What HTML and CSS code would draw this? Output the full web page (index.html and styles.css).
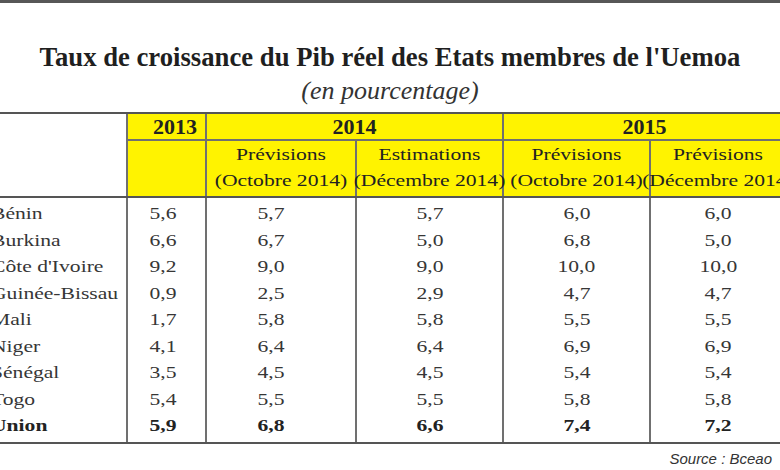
FILE: index.html
```html
<!DOCTYPE html>
<html lang="fr">
<head>
<meta charset="utf-8">
<title>Taux de croissance du Pib réel des Etats membres de l'Uemoa</title>
<link rel="stylesheet" href="styles.css">
</head>
<body>
<div class="topbar"></div>
<h1 class="title">Taux de croissance du Pib réel des Etats membres de l'Uemoa</h1>
<p class="subtitle">(en pourcentage)</p>
<table class="growth">
  <colgroup>
    <col class="c-label"><col class="c-2013"><col class="c-prev14"><col class="c-est14"><col class="c-prev15a"><col class="c-prev15b">
  </colgroup>
  <thead>
    <tr class="years">
      <th class="blank" rowspan="2"></th>
      <th class="year y2013">2013</th>
      <th class="year" colspan="2">2014</th>
      <th class="year" colspan="2">2015</th>
    </tr>
    <tr class="kinds">
      <th class="sub"></th>
      <th class="sub"><span class="s">Prévisions</span><span class="s">(Octobre 2014)</span></th>
      <th class="sub"><span class="s">Estimations</span><span class="s">(Décembre 2014)</span></th>
      <th class="sub"><span class="s">Prévisions</span><span class="s">(Octobre 2014)</span></th>
      <th class="sub"><span class="s">Prévisions</span><span class="s">(Décembre 2014)</span></th>
    </tr>
  </thead>
  <tbody>
    <tr class="first"><td class="country"><span class="s">Bénin</span></td><td class="v13"><span class="s">5,6</span></td><td class="v14p"><span class="s">5,7</span></td><td><span class="s">5,7</span></td><td><span class="s">6,0</span></td><td><span class="s">6,0</span></td></tr>
    <tr><td class="country"><span class="s">Burkina</span></td><td class="v13"><span class="s">6,6</span></td><td class="v14p"><span class="s">6,7</span></td><td><span class="s">5,0</span></td><td><span class="s">6,8</span></td><td><span class="s">5,0</span></td></tr>
    <tr><td class="country"><span class="s">Côte d'Ivoire</span></td><td class="v13"><span class="s">9,2</span></td><td class="v14p"><span class="s">9,0</span></td><td><span class="s">9,0</span></td><td><span class="s">10,0</span></td><td><span class="s">10,0</span></td></tr>
    <tr><td class="country"><span class="s">Guinée-Bissau</span></td><td class="v13"><span class="s">0,9</span></td><td class="v14p"><span class="s">2,5</span></td><td><span class="s">2,9</span></td><td><span class="s">4,7</span></td><td><span class="s">4,7</span></td></tr>
    <tr><td class="country"><span class="s">Mali</span></td><td class="v13"><span class="s">1,7</span></td><td class="v14p"><span class="s">5,8</span></td><td><span class="s">5,8</span></td><td><span class="s">5,5</span></td><td><span class="s">5,5</span></td></tr>
    <tr><td class="country"><span class="s">Niger</span></td><td class="v13"><span class="s">4,1</span></td><td class="v14p"><span class="s">6,4</span></td><td><span class="s">6,4</span></td><td><span class="s">6,9</span></td><td><span class="s">6,9</span></td></tr>
    <tr><td class="country"><span class="s">Sénégal</span></td><td class="v13"><span class="s">3,5</span></td><td class="v14p"><span class="s">4,5</span></td><td><span class="s">4,5</span></td><td><span class="s">5,4</span></td><td><span class="s">5,4</span></td></tr>
    <tr><td class="country"><span class="s">Togo</span></td><td class="v13"><span class="s">5,4</span></td><td class="v14p"><span class="s">5,5</span></td><td><span class="s">5,5</span></td><td><span class="s">5,8</span></td><td><span class="s">5,8</span></td></tr>
    <tr class="total"><td class="country"><span class="s">Union</span></td><td class="v13"><span class="s">5,9</span></td><td class="v14p"><span class="s">6,8</span></td><td><span class="s">6,6</span></td><td><span class="s">7,4</span></td><td><span class="s">7,2</span></td></tr>
  </tbody>
</table>
<p class="source">Source : Bceao</p>
</body>
</html>
```

FILE: styles.css
```css
html, body {
  margin: 0;
  padding: 0;
}

body {
  width: 780px;
  height: 470px;
  overflow: hidden;
  background: #ffffff;
  font-family: "Liberation Serif", "Times New Roman", serif;
  color: #333333;
}

.topbar {
  height: 3px;
  background: #575757;
}

.title {
  margin: 39px 0 0;
  font-size: 26.7px;
  line-height: 30px;
  font-weight: bold;
  text-align: center;
  color: #1f1f1f;
  white-space: nowrap;
}

.subtitle {
  margin: 5px 0 0;
  font-size: 26px;
  line-height: 28px;
  font-style: italic;
  text-align: center;
  color: #333333;
}

.growth {
  border-collapse: collapse;
  table-layout: fixed;
  width: 785px;
  margin-top: 7px;
}

.c-label { width: 127px; }
.c-2013 { width: 79px; }
.c-prev14 { width: 150px; }
.c-est14 { width: 147px; }
.c-prev15a { width: 147px; }
.c-prev15b { width: 135px; }

.growth th,
.growth td {
  padding: 0;
  border-left: 2px solid #707070;
  text-align: center;
  white-space: nowrap;
}

.growth th.blank,
.growth td.country {
  border-left: none;
  text-align: left;
}

.growth thead th {
  background: #fff300;
  color: #222222;
}

.growth thead th.blank {
  background: #ffffff;
  border-top: 2px solid #555555;
  border-bottom: 2px solid #555555;
}

.years th {
  border-top: 2px solid #555555;
  border-bottom: 2px solid #707070;
  height: 25px;
  line-height: 24px;
  font-size: 22px;
  font-weight: bold;
}

.years th.y2013 {
  text-align: right;
  padding-right: 8px;
}

.kinds th {
  height: 55px;
  border-bottom: 2px solid #555555;
  font-weight: normal;
  font-size: 17.5px;
  line-height: 26px;
  color: #333333;
  vertical-align: top;
  padding-top: 0;
}

.kinds th .s {
  display: block;
}

.s {
  display: inline-block;
  transform: scaleX(1.234);
}

.growth tbody td {
  font-size: 17.5px;
  line-height: 26.5px;
  height: 26.5px;
  color: #363636;
}

.growth td.country .s {
  transform-origin: left center;
  margin-left: -9px;
}

.growth td.v13 {
  padding-right: 7px;
}

.growth td.v14p {
  padding-right: 20px;
}

.growth tr.first td {
  padding-top: 2px;
}

.growth tr.total td {
  font-weight: bold;
  color: #222222;
  padding-bottom: 3px;
  border-bottom: 2px solid #555555;
}

.source {
  margin: 0;
  padding: 6px 8px 0 0;
  text-align: right;
  font-family: "Liberation Sans", Arial, sans-serif;
  font-style: italic;
  font-size: 15px;
  line-height: 18px;
  color: #333333;
}
```
